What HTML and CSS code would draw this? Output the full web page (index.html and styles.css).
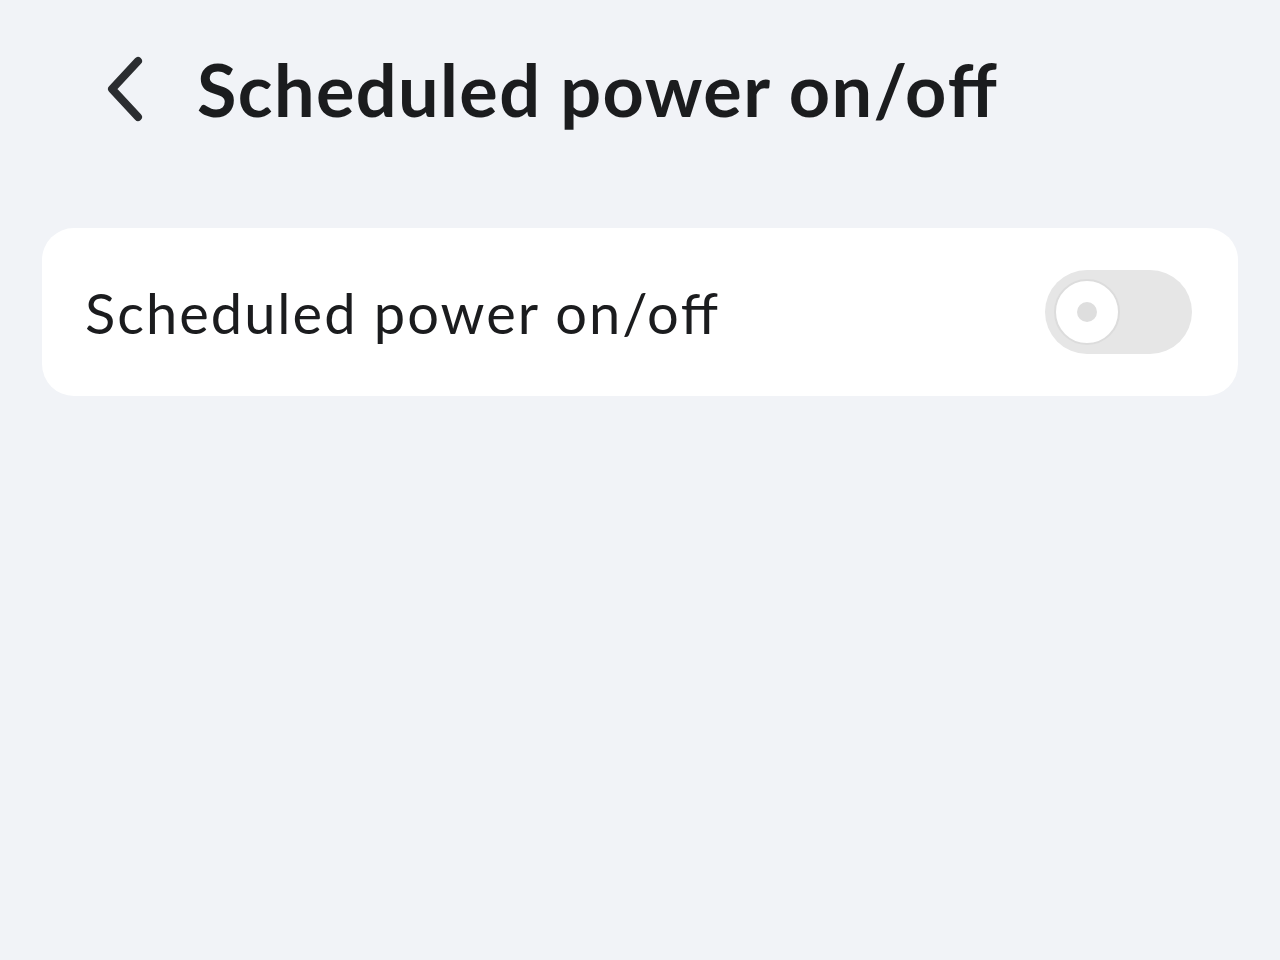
FILE: index.html
```html
<!DOCTYPE html>
<html lang="en">
<head>
  <meta charset="UTF-8">
  <meta name="viewport" content="width=device-width, initial-scale=1.0">
  <title>Scheduled power on/off</title>
  <link rel="stylesheet" href="styles.css">
</head>
<body>
  <header class="topbar">
    <button class="back" aria-label="Back">
      <svg width="40" height="66" viewBox="0 0 40 66">
        <path d="M34 5 L8 33 L34 61" fill="none" stroke="#2b2d30" stroke-width="8" stroke-linecap="round" stroke-linejoin="round"/>
      </svg>
    </button>
    <h1>Scheduled power on/o<span class="lig">ff</span></h1>
  </header>

  <main class="list">
    <div class="card">
      <span class="label">Scheduled power on/o<span class="lig">ff</span></span>
      <span class="switch">
        <span class="knob"></span>
      </span>
    </div>
  </main>
</body>
</html>
```

FILE: styles.css
```css
* {
  margin: 0;
  padding: 0;
  box-sizing: border-box;
}

body {
  background: #f1f3f7;
  font-family: Lato, "Noto Sans", sans-serif;
  color: #1b1c1e;
  height: 100vh;
}

.topbar {
  display: flex;
  align-items: center;
  height: 178px;
  padding: 0 0 0 104px;
}

.back {
  background: none;
  border: none;
  display: flex;
  width: 40px;
  margin-right: 53px;
}

h1 {
  font-size: 72px;
  font-weight: 700;
  letter-spacing: 1.4px;
}

.lig {
  letter-spacing: 0;
}

.list {
  padding: 50px 42px 0;
}

.card {
  background: #fff;
  border-radius: 32px;
  height: 168px;
  display: flex;
  align-items: center;
  justify-content: space-between;
  padding: 0 46px 0 43px;
}

.label {
  font-size: 56px;
  letter-spacing: 2px;
}

.switch {
  width: 147px;
  height: 84px;
  border-radius: 42px;
  background: #e6e6e6;
  display: flex;
  align-items: center;
  padding-left: 9px;
}

.knob {
  width: 66px;
  height: 66px;
  border-radius: 50%;
  background: #fff;
  border: 2px solid #dcdcdc;
  display: flex;
  align-items: center;
  justify-content: center;
}

.knob::after {
  content: "";
  width: 20px;
  height: 20px;
  border-radius: 50%;
  background: #dedede;
}
```
